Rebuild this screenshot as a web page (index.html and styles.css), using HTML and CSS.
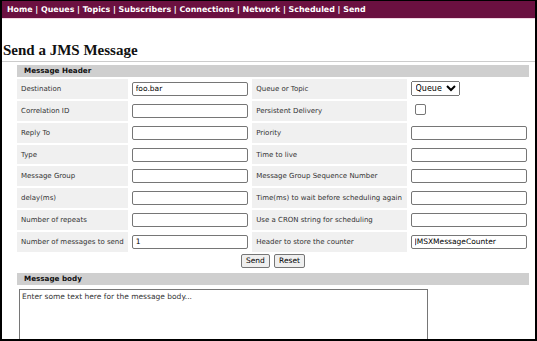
FILE: index.html
```html
<!DOCTYPE html>
<html>
<head>
<meta charset="utf-8">
<link rel="stylesheet" href="styles.css">
</head>
<body>
<div class="frame">
  <div class="nav">
    <a>Home</a> | <a>Queues</a> | <a>Topics</a> | <a>Subscribers</a> | <a>Connections</a> | <a>Network</a> | <a>Scheduled</a> | <a>Send</a>
  </div>
  <h2 class="title">Send a JMS Message</h2>
  <form class="form">
    <table class="grid">
      <tr><th colspan="4" class="section">Message Header</th></tr>
      <tr>
        <td class="lbl">Destination</td>
        <td class="fld"><input class="txt" type="text" value="foo.bar"></td>
        <td class="lbl">Queue or Topic</td>
        <td class="fld"><select class="sel"><option>Queue</option></select></td>
      </tr>
      <tr>
        <td class="lbl">Correlation ID</td>
        <td class="fld"><input class="txt" type="text"></td>
        <td class="lbl">Persistent Delivery</td>
        <td class="fld"><span class="chk"></span></td>
      </tr>
      <tr>
        <td class="lbl">Reply To</td>
        <td class="fld"><input class="txt" type="text"></td>
        <td class="lbl">Priority</td>
        <td class="fld"><input class="txt" type="text"></td>
      </tr>
      <tr>
        <td class="lbl">Type</td>
        <td class="fld"><input class="txt" type="text"></td>
        <td class="lbl">Time to live</td>
        <td class="fld"><input class="txt" type="text"></td>
      </tr>
      <tr>
        <td class="lbl">Message Group</td>
        <td class="fld"><input class="txt" type="text"></td>
        <td class="lbl">Message Group Sequence Number</td>
        <td class="fld"><input class="txt" type="text"></td>
      </tr>
      <tr>
        <td class="lbl">delay(ms)</td>
        <td class="fld"><input class="txt" type="text"></td>
        <td class="lbl">Time(ms) to wait before scheduling again</td>
        <td class="fld"><input class="txt" type="text"></td>
      </tr>
      <tr>
        <td class="lbl">Number of repeats</td>
        <td class="fld"><input class="txt" type="text"></td>
        <td class="lbl">Use a CRON string for scheduling</td>
        <td class="fld"><input class="txt" type="text"></td>
      </tr>
      <tr>
        <td class="lbl">Number of messages to send</td>
        <td class="fld"><input class="txt" type="text" value="1"></td>
        <td class="lbl">Header to store the counter</td>
        <td class="fld"><input class="txt" type="text" value="JMSXMessageCounter"></td>
      </tr>
      <tr>
        <td colspan="4" class="buttons">
          <button type="button" class="btn">Send</button>
          <button type="button" class="btn">Reset</button>
        </td>
      </tr>
      <tr><th colspan="4" class="section">Message body</th></tr>
      <tr>
        <td colspan="4" class="bodycell"><textarea class="body" placeholder="Enter some text here for the message body..."></textarea></td>
      </tr>
    </table>
  </form>
</div>
</body>
</html>
```

FILE: styles.css
```css
html, body {
  margin: 0;
  padding: 0;
  background: #fff;
}
.frame {
  box-sizing: border-box;
  width: 537px;
  height: 341px;
  overflow: hidden;
  border-style: solid;
  border-color: #000;
  border-width: 1px 2px 2px 2px;
  font-family: "DejaVu Sans", Verdana, sans-serif;
}
.nav {
  background: #6b1040;
  color: #fff;
  font-weight: bold;
  font-size: 7.9px;
  height: 17px;
  line-height: 17px;
  padding-left: 5px;
  border-bottom: 1px solid #f3d6e3;
  white-space: nowrap;
}
.nav a {
  color: #fff;
}
.title {
  font-family: "Liberation Serif", "Times New Roman", serif;
  font-weight: bold;
  font-size: 15px;
  margin: 23px 0 0 0;
  padding: 0 0 2px 1px;
  line-height: 17px;
  border-bottom: 1px solid #ccc;
  color: #111;
}
.form {
  margin: 1px 0 0 0;
}
.grid {
  margin-left: 13px;
  width: 516px;
  border-spacing: 2px;
  font-size: 7px;
  color: #333;
}
.section {
  background: #cfcfcf;
  text-align: left;
  font-weight: bold;
  font-size: 7.2px;
  height: 12px;
  padding: 0 0 0 7px;
  line-height: 12px;
  color: #111;
}
.lbl {
  background: #f0f0f0;
  padding: 0 4px;
  height: 19.86px;
  white-space: nowrap;
}
.grid tr td.lbl:first-child {
  width: 102px;
}
.fld {
  padding: 0 2px;
}
.txt {
  box-sizing: border-box;
  width: 116px;
  height: 14px;
  border: 1px solid #767676;
  border-radius: 2px;
  font-family: "DejaVu Sans", Verdana, sans-serif;
  font-size: 7.5px;
  padding: 0 3px;
  margin: 0;
  display: block;
}
.sel {
  height: 15px;
  font-family: "DejaVu Sans", Verdana, sans-serif;
  font-size: 8px;
  margin: 0;
  padding: 0;
  display: block;
}
.chk {
  display: block;
  width: 9px;
  height: 9px;
  border: 1px solid #767676;
  border-radius: 2px;
  margin: -3px 0 0 4px;
}
.buttons {
  text-align: center;
  padding: 0;
  height: 17px;
  vertical-align: top;
}
.btn {
  font-family: "DejaVu Sans", Verdana, sans-serif;
  font-size: 7.5px;
  height: 14px;
  padding: 0 4px;
  border: 1px solid #767676;
  border-radius: 2px;
  background: #efefef;
  margin: 0 1px;
  vertical-align: top;
}
.bodycell {
  padding: 0;
}
.body {
  display: block;
  box-sizing: border-box;
  width: 409px;
  height: 70px;
  margin: 2px 0 0 2px;
  border: 1px solid #767676;
  font-family: "DejaVu Sans", Verdana, sans-serif;
  font-size: 7.5px;
  padding: 2px 2px;
  resize: none;
}
.body::placeholder {
  color: #333;
}
```
